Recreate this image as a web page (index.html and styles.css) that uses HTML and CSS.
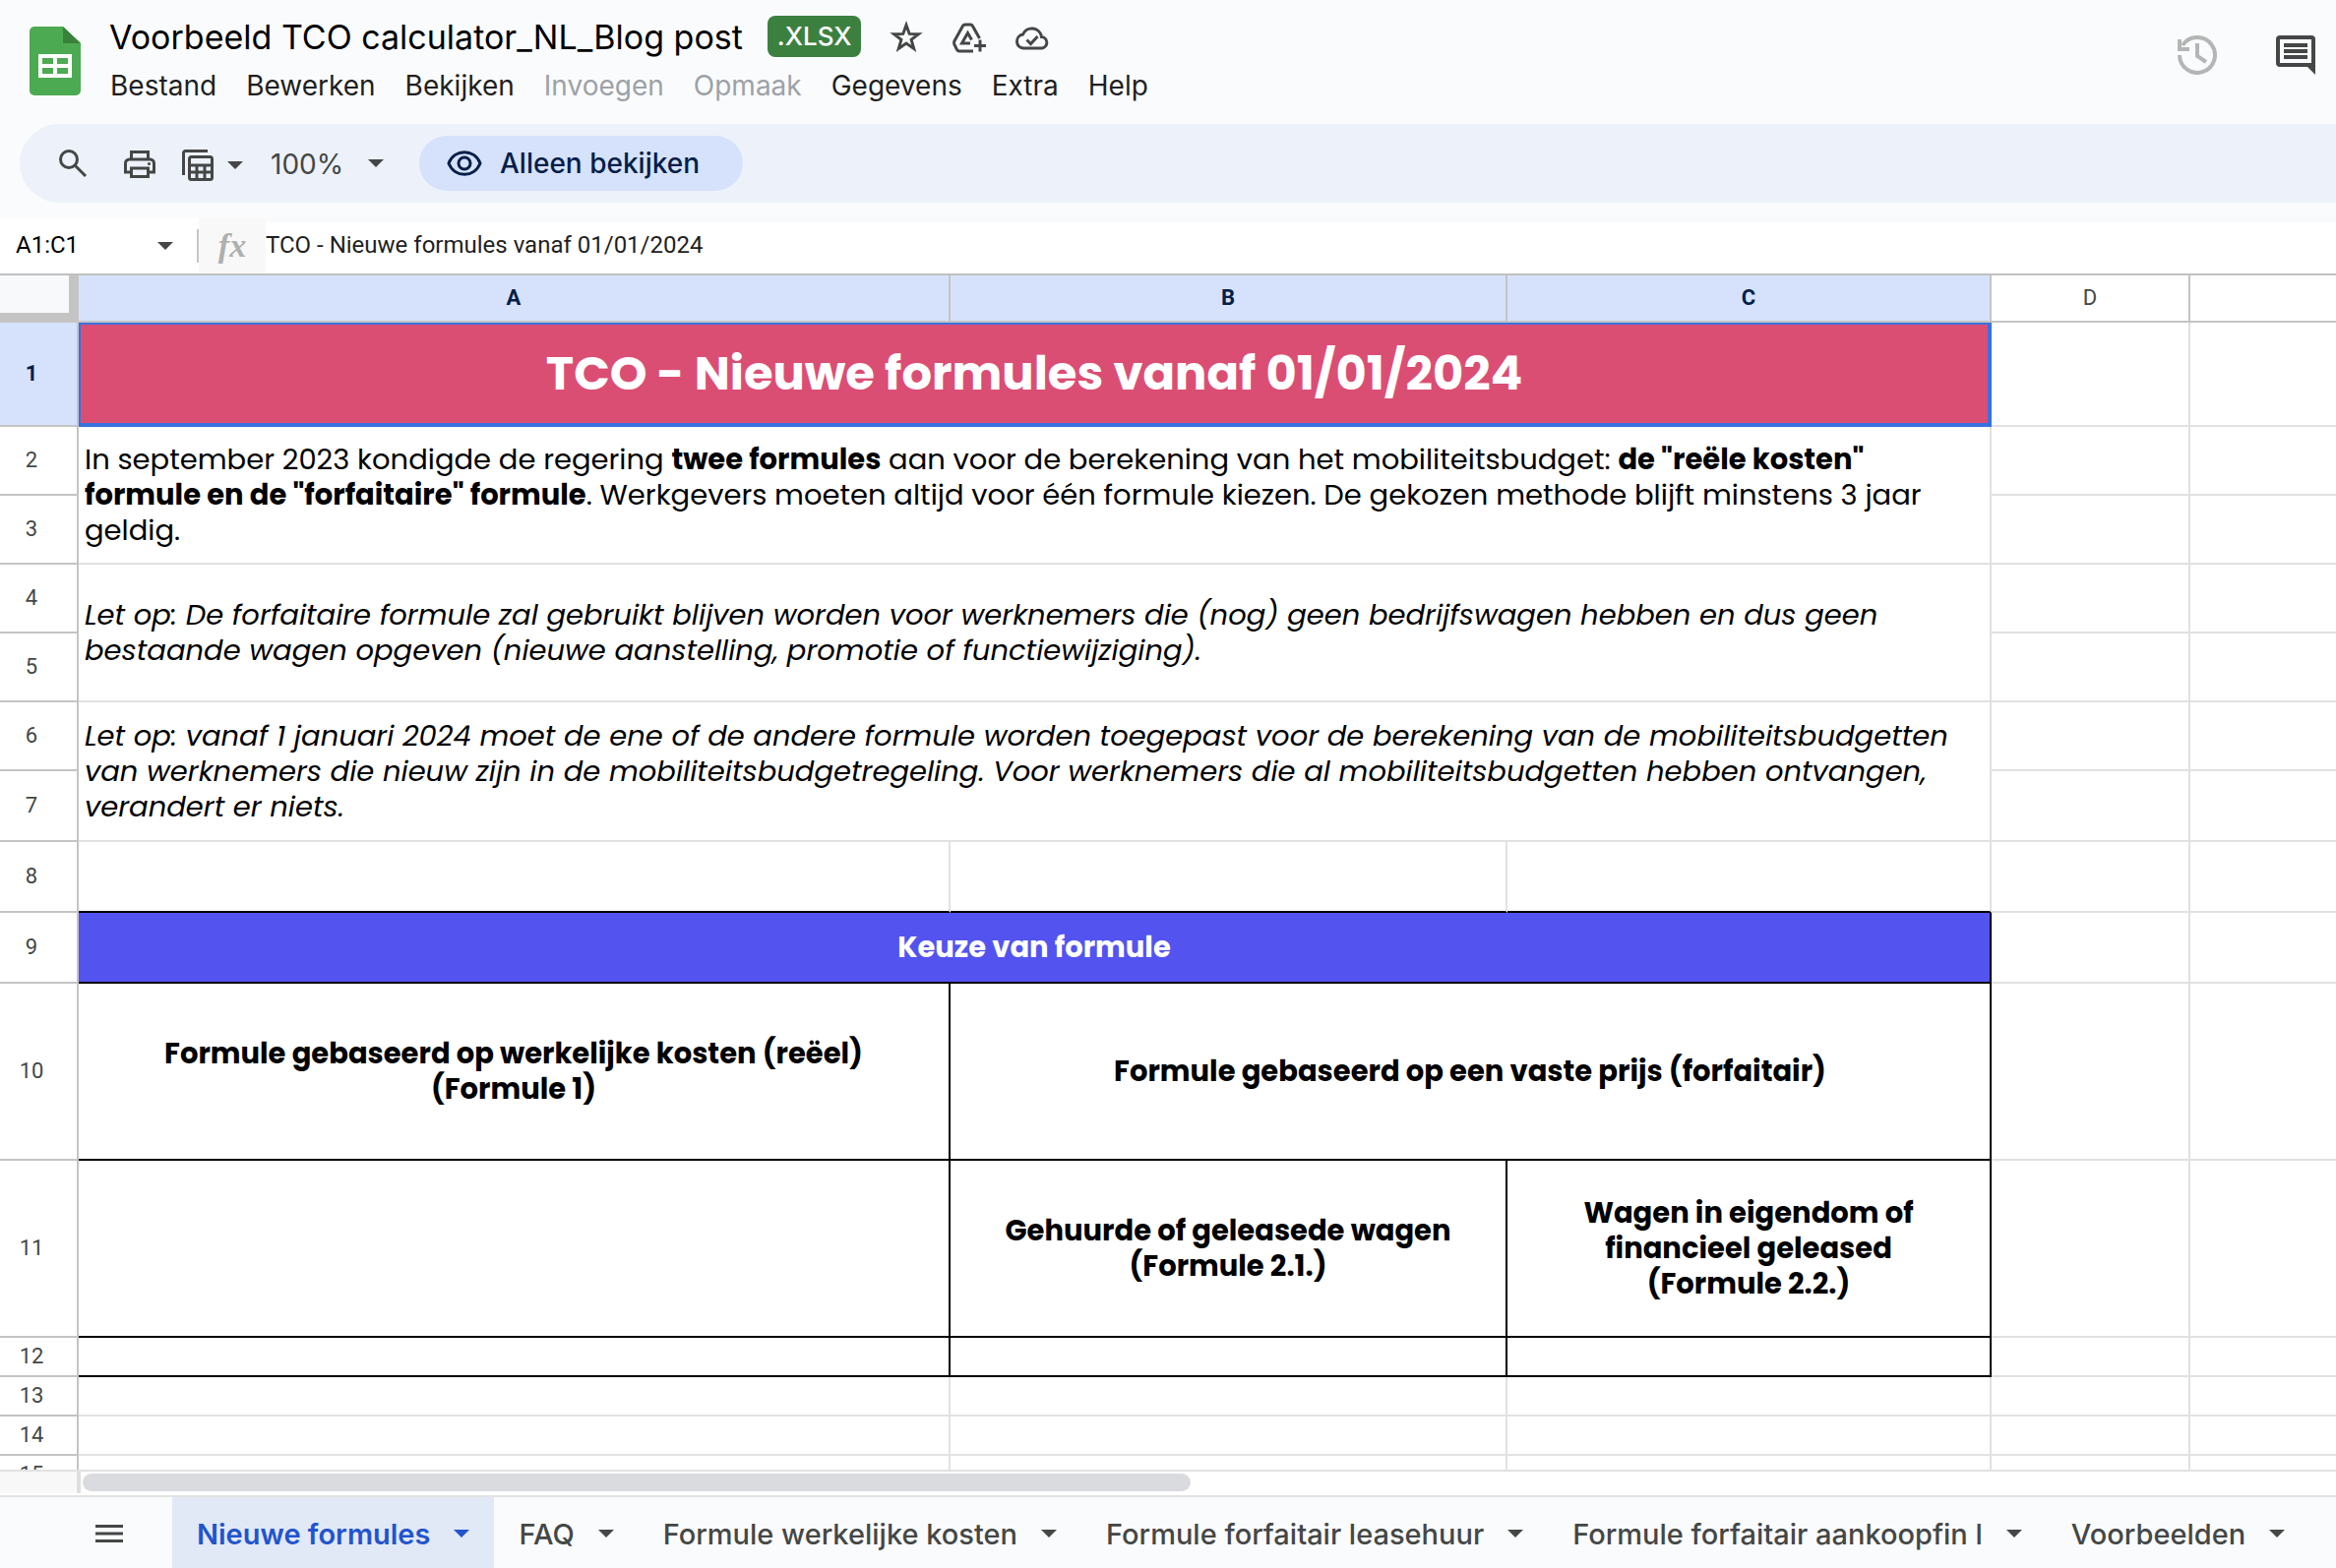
FILE: index.html
```html
<!DOCTYPE html>
<html lang="nl">
<head>
<meta charset="utf-8">
<title>Voorbeeld TCO calculator_NL_Blog post</title>
<link rel="stylesheet" href="styles.css">
</head>
<body>
<svg class="defs" aria-hidden="true">
  <symbol id="caret" viewBox="0 0 16 8"><path d="M0 0h16L8 8z" fill="currentColor"/></symbol>
</svg>

<header class="top">
  <svg class="logo" viewBox="0 0 52 70" aria-label="Spreadsheets">
    <path d="M5 0h29l18 17v48a5 5 0 0 1-5 5H5a5 5 0 0 1-5-5V5a5 5 0 0 1 5-5z" fill="#4caa52"/>
    <path d="M34 0l18 17H34z" fill="#3a813c"/>
    <path d="M9 28h34v24H9zM13 32v6h11v-6zM28 32v6h11v-6zM13 42v6h11v-6zM28 42v6h11v-6z" fill="#fff" fill-rule="evenodd"/>
  </svg>
  <div class="doc">
    <div class="title-row">
      <h1 class="title">Voorbeeld TCO calculator_NL_Blog post</h1>
      <span class="badge">.XLSX</span>
      <button class="icon-btn" aria-label="Ster"><svg class="icon" viewBox="0 0 36 36"><path d="M18 6.500l3.200 8.900 9.300.3-7.400 5.700 2.600 9-7.700-5.300-7.700 5.300 2.600-9-7.400-5.700 9.300-.3z" fill="none" stroke="currentColor" stroke-width="3"/></svg></button>
      <button class="icon-btn" aria-label="Snelkoppeling toevoegen aan Drive"><svg class="icon" viewBox="0 0 36 36"><g fill="none" stroke="currentColor" stroke-width="3"><path d="M28.500 20L21.500 7.500Q20.800 6 19.200 6h-5.400q-1.600 0-2.400 1.500L2.800 23q-.8 1.500 0 3l2.500 5q.8 2 2.600 2H22"/><path d="M19 25h-8.500l6-10.500 4 7"/><path d="M29 21.500v12M23 27.500h12"/></g></svg></button>
      <button class="icon-btn" aria-label="Documentstatus"><svg class="icon" viewBox="0 0 36 36"><g fill="none" stroke="currentColor" stroke-width="3"><path d="M9 30a7 7 0 0 1-.6-13.900A10 10 0 0 1 27.500 18.500a5.800 5.800 0 0 1 .5 11.500z"/><path d="M12.500 21.500l4 4 7-7.500"/></g></svg></button>
    </div>
    <nav class="menu">
      <button>Bestand</button><button>Bewerken</button><button>Bekijken</button><button disabled>Invoegen</button><button disabled>Opmaak</button><button>Gegevens</button><button>Extra</button><button>Help</button>
    </nav>
  </div>
  <div class="top-actions">
    <button class="icon-btn faded" aria-label="Versiegeschiedenis"><svg class="icon-l" viewBox="0 0 40 40"><g fill="none" stroke="currentColor" stroke-width="4"><path d="M2 20A18 18 0 1 0 5 10"/><path d="M2 4v10h10"/><path d="M20 8v13l9 6"/></g></svg></button>
    <button class="icon-btn" aria-label="Reacties"><svg class="icon-l" viewBox="0 0 40 40"><path d="M4 0h32a4 4 0 0 1 4 4v36l-8-8H4a4 4 0 0 1-4-4V4a4 4 0 0 1 4-4zM4 4v24h32V4zM8 8h24v4H8zM8 14h24v4H8zM8 20h24v4H8z" fill="currentColor" fill-rule="evenodd"/></svg></button>
  </div>
</header>

<div class="toolbar">
  <button class="icon-btn search" aria-label="Zoeken in menu's"><svg class="icon-s" viewBox="0 0 32 32"><g fill="none" stroke="currentColor" stroke-width="3"><circle cx="12" cy="12" r="8.500"/><path d="M18 18l11 11"/></g></svg></button>
  <button class="icon-btn print" aria-label="Afdrukken"><svg class="icon-s" viewBox="0 0 32 32"><g fill="none" stroke="currentColor" stroke-width="3"><path d="M7.500 12V4.500h17V12"/><path d="M7 25H1.500v-9a4 4 0 0 1 4-4h21a4 4 0 0 1 4 4v9H25"/><path d="M7.500 21h17v8.500h-17z"/></g><circle cx="25.500" cy="16.500" r="1.600" fill="currentColor"/></svg></button>
  <button class="icon-btn calc" aria-label="Berekeningen"><svg class="icon-s" viewBox="0 0 32 32"><g fill="none" stroke="currentColor" stroke-width="3"><path d="M1.500 26V3.500a2 2 0 0 1 2-2H26"/><rect x="7.500" y="7.500" width="23" height="23" rx="2"/><path d="M8 16h22M8 23h22M15 16v14M23 16v14"/></g></svg><svg class="caret"><use href="#caret"/></svg></button>
  <label class="zoom"><input class="zoom-input" value="100%" aria-label="Zoom"><svg class="caret"><use href="#caret"/></svg></label>
  <button class="view-only"><svg class="eye" viewBox="0 0 36 26"><g fill="none" stroke="currentColor" stroke-width="3"><path d="M2 13C8 -2 28 -2 34 13C28 28 8 28 2 13z"/><circle cx="18" cy="13" r="6"/></g></svg>Alleen bekijken</button>
</div>

<div class="formula-bar">
  <label class="name-box"><input class="name-input" value="A1:C1" aria-label="Naamvak"><svg class="caret"><use href="#caret"/></svg></label>
  <span class="fx">fx</span>
  <input class="formula-input" value="TCO - Nieuwe formules vanaf 01/01/2024" aria-label="Formulebalk">
</div>

<main class="sheet">
  <table class="grid">
    <colgroup><col class="c-num"><col class="c-a"><col class="c-b"><col class="c-c"><col class="c-d"><col></colgroup>
    <thead>
      <tr><th class="corner"></th><th class="on">A</th><th class="on">B</th><th class="on">C</th><th>D</th><th></th></tr>
    </thead>
    <tbody>
      <tr class="h-title"><th class="on">1</th><td colspan="3" class="selected">TCO - Nieuwe formules vanaf 01/01/2024</td><td></td><td></td></tr>
      <tr class="h-text"><th>2</th><td colspan="3" rowspan="2" class="prose">In september 2023 kondigde de regering <b>twee formules</b> aan voor de berekening van het mobiliteitsbudget: <b>de "reële kosten"<br>formule en de "forfaitaire" formule</b>. Werkgevers moeten altijd voor één formule kiezen. De gekozen methode blijft minstens 3 jaar<br>geldig.</td><td></td><td></td></tr>
      <tr class="h-text"><th>3</th><td></td><td></td></tr>
      <tr class="h-text"><th>4</th><td colspan="3" rowspan="2" class="prose note">Let op: De forfaitaire formule zal gebruikt blijven worden voor werknemers die (nog) geen bedrijfswagen hebben en dus geen<br>bestaande wagen opgeven (nieuwe aanstelling, promotie of functiewijziging).</td><td></td><td></td></tr>
      <tr class="h-text"><th>5</th><td></td><td></td></tr>
      <tr class="h-text"><th>6</th><td colspan="3" rowspan="2" class="prose note">Let op: vanaf 1 januari 2024 moet de ene of de andere formule worden toegepast voor de berekening van de mobiliteitsbudgetten<br>van werknemers die nieuw zijn in de mobiliteitsbudgetregeling. Voor werknemers die al mobiliteitsbudgetten hebben ontvangen,<br>verandert er niets.</td><td></td><td></td></tr>
      <tr class="h-mid"><th>7</th><td></td><td></td></tr>
      <tr class="h-mid"><th>8</th><td class="edge-b"></td><td class="edge-b"></td><td class="edge-b"></td><td></td><td></td></tr>
      <tr class="h-mid"><th>9</th><td colspan="3" class="boxed banner">Keuze van formule</td><td></td><td></td></tr>
      <tr class="h-tall"><th>10</th><td class="boxed">Formule gebaseerd op werkelijke kosten (reëel)<br>(Formule 1)</td><td colspan="2" class="boxed">Formule gebaseerd op een vaste prijs (forfaitair)</td><td></td><td></td></tr>
      <tr class="h-tall"><th>11</th><td class="boxed"></td><td class="boxed">Gehuurde of geleasede wagen<br>(Formule 2.1.)</td><td class="boxed">Wagen in eigendom of<br>financieel geleased<br>(Formule 2.2.)</td><td></td><td></td></tr>
      <tr class="h-row"><th>12</th><td class="boxed"></td><td class="boxed"></td><td class="boxed"></td><td></td><td></td></tr>
      <tr class="h-row"><th>13</th><td></td><td></td><td></td><td></td><td></td></tr>
      <tr class="h-row"><th>14</th><td></td><td></td><td></td><td></td><td></td></tr>
      <tr class="h-row"><th>15</th><td></td><td></td><td></td><td></td><td></td></tr>
    </tbody>
  </table>
</main>

<div class="scroll-strip"><div class="scroll-corner"></div><div class="scroll-track"><div class="scroll-thumb"></div></div></div>

<footer class="tabs">
  <button class="all-sheets" aria-label="Alle werkbladen"><svg class="burger" viewBox="0 0 28 20"><path d="M0 1h28v3H0zM0 8.500h28v3H0zM0 16h28v3H0z" fill="currentColor"/></svg></button>
  <button class="tab active">Nieuwe formules<svg class="caret"><use href="#caret"/></svg></button>
  <button class="tab">FAQ<svg class="caret"><use href="#caret"/></svg></button>
  <button class="tab">Formule werkelijke kosten<svg class="caret"><use href="#caret"/></svg></button>
  <button class="tab">Formule forfaitair leasehuur<svg class="caret"><use href="#caret"/></svg></button>
  <button class="tab">Formule forfaitair aankoopfin l<svg class="caret"><use href="#caret"/></svg></button>
  <button class="tab">Voorbeelden<svg class="caret"><use href="#caret"/></svg></button>
</footer>
</body>
</html>
```
FILE: styles.css
```css
* { box-sizing: border-box; }

body {
  margin: 0;
  height: 100vh;
  display: flex;
  flex-direction: column;
  overflow: hidden;
  background: #fafbfd;
  color: #1f1f1f;
  font-family: "Google Sans", Inter, sans-serif;
}

button, input {
  margin: 0;
  padding: 0;
  border: 0;
  background: none;
  color: inherit;
  font: inherit;
  white-space: nowrap;
}

svg { display: block; flex: none; }
.defs { position: absolute; width: 0; height: 0; }
.caret { width: 16px; height: 8px; }
.icon { width: 36px; height: 36px; }
.icon-s { width: 32px; height: 32px; }
.icon-l { width: 40px; height: 40px; }
.icon-btn { color: #444746; display: flex; align-items: center; }

/* Title and menus */
.top {
  display: flex;
  align-items: flex-start;
  height: 126px;
  padding: 16px 21px 0 30px;
  flex: none;
}
.logo { width: 52px; height: 70px; margin-top: 11px; }
.doc { margin-left: 29px; }
.title-row { display: flex; align-items: center; gap: 28px; height: 42px; }
.title { margin: 0; font-size: 34px; font-weight: 400; color: #000; white-space: nowrap; }
.badge {
  margin-left: -3px;
  padding: 0 10px;
  border-radius: 8px;
  background: #3c8040;
  color: #fff;
  font-size: 26px;
  font-weight: 500;
  line-height: 42px;
}
.menu { display: flex; gap: 30px; height: 58px; padding-left: 1px; font-size: 28px; align-items: center; }
.menu button:disabled { color: #9da2a7; }
.top-actions { display: flex; gap: 60px; margin: 20px 0 0 auto; }
.faded { color: #b4b6b5; }

/* Toolbar */
.toolbar {
  display: flex;
  align-items: center;
  flex: none;
  height: 80px;
  margin-left: 20px;
  padding-left: 38px;
  border-radius: 40px 0 0 40px;
  background: #edf2fa;
  color: #444746;
  font-size: 28px;
}
.print { margin-left: 36px; }
.calc { margin-left: 27px; gap: 14px; padding-top: 4px; }
.zoom { display: flex; align-items: center; margin-left: 28px; }
.zoom-input { width: 99px; padding-top: 2px; }
.view-only {
  display: flex;
  align-items: center;
  gap: 18px;
  height: 56px;
  margin-left: 36px;
  padding: 0 44px 0 28px;
  border-radius: 28px;
  background: #d6e2fb;
  color: #041e49;
  font-weight: 500;
}
.eye { width: 36px; height: 26px; }

/* Name box and formula */
.formula-bar {
  display: flex;
  flex: none;
  height: 58px;
  margin-top: 16px;
  border-bottom: 2px solid #c0c0c0;
  background: #fff;
  font-family: Roboto, sans-serif;
  font-size: 24px;
}
.name-box {
  display: flex;
  align-items: center;
  width: 202px;
  padding: 0 26px 0 16px;
  color: #444746;
  background: linear-gradient(#c7c7c7, #c7c7c7) right center / 2px 34px no-repeat;
}
.name-input { width: 144px; padding-bottom: 2px; color: #000; }
.fx {
  width: 68px;
  background: #f8f8f8;
  color: #aeb0af;
  font-family: "Liberation Serif", serif;
  font-size: 34px;
  font-style: italic;
  font-weight: 700;
  line-height: 56px;
  text-align: center;
}
.formula-input { flex: 1; padding-bottom: 6px; border-top: 4px solid #f9fafb; }

/* Grid */
.sheet { flex: 1; min-height: 0; overflow: hidden; background: #fff; border-bottom: 2px solid #e1e1e1; }
.grid { width: 100%; table-layout: fixed; border-collapse: separate; border-spacing: 0; }
.c-num { width: 80px; }
.c-a { width: 886px; }
.c-b { width: 566px; }
.c-c { width: 492px; }
.c-d { width: 202px; }
.grid th, .grid td { padding: 0; border: solid #e1e1e1; border-width: 0 2px 2px 0; }
.grid th {
  border-color: #c4c4c4;
  color: #444746;
  font-family: Roboto, sans-serif;
  font-size: 22px;
  font-weight: 400;
  line-height: 24px;
}
.grid thead th { height: 48px; }
.grid tbody th { padding-right: 14px; }
.grid tr > :last-child { border-right-width: 0; }
.grid .on { background: #d6e2fb; color: #041e49; font-weight: 700; }
.grid .corner { border-width: 0 10px 10px 0; background: #f8f9fa; }
.grid td {
  color: #000;
  font-family: Poppins, Inter, sans-serif;
  font-size: 29px;
  line-height: 36px;
  text-align: center;
  white-space: nowrap;
}
.grid .prose { padding: 0 0 0 6px; text-align: left; }
.grid .note { font-style: italic; }
.grid .selected {
  border-color: #3871e0;
  border-width: 2px 4px 4px 2px;
  background: #db4e74;
  color: #fff;
  font-size: 48px;
  font-weight: 700;
  line-height: 60px;
}
.grid .edge-b { border-bottom-color: #000; }
.grid .boxed { border-color: #000; font-weight: 700; }
.grid .banner { background: #5353f0; color: #fff; }
.h-title { height: 106px; }
.h-text { height: 70px; }
.h-mid { height: 72px; }
.h-tall { height: 180px; }
.h-row { height: 40px; }

/* Horizontal scrollbar */
.scroll-strip { display: flex; flex: none; height: 24px; background: #fff; }
.scroll-corner { width: 82px; height: 22px; border-right: 4px solid #dedede; background: #f8f8f8; }
.scroll-track { flex: 1; padding: 2px; }
.scroll-thumb { width: 49.2%; height: 18px; border-radius: 9px; background: #dadbdf; }

/* Sheet tabs */
.tabs { display: flex; flex: none; height: 74px; border-top: 2px solid #e1e3e1; color: #444746; font-size: 29px; overflow: hidden; }
.all-sheets { width: 175px; padding-left: 97px; padding-top: 2px; }
.burger { width: 28px; height: 20px; }
.tab { display: flex; align-items: center; flex: none; gap: 24px; padding: 2px 25px 0; font-weight: 500; }
.tab.active { background: #e1e8f6; color: #2254cc; font-weight: 600; }
```
